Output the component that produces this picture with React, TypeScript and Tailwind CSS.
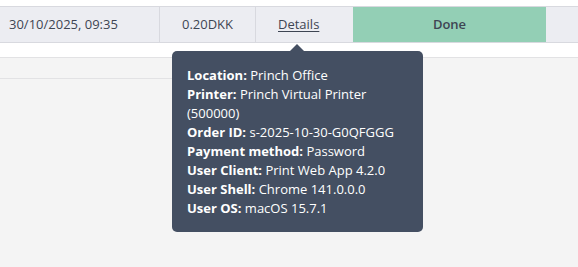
const rows: [string, string][] = [
  ["Location:", "Princh Office"],
  ["Printer:", "Princh Virtual Printer (500000)"],
  ["Order ID:", "s-2025-10-30-G0QFGGG"],
  ["Payment method:", "Password"],
  ["User Client:", "Print Web App 4.2.0"],
  ["User Shell:", "Chrome 141.0.0.0"],
  ["User OS:", "macOS 15.7.1"],
];

export default function App() {
  return (
    <div
      className="relative w-[578px] h-[267px] overflow-hidden bg-[#f4f4f4] text-[#3e4553]"
      style={{ fontFamily: '"Open Sans", "Noto Sans", sans-serif' }}
    >
      <div className="h-[6px] bg-white" />
      <div className="flex h-[37px] border-y border-[#d8d9df] bg-[#ecedf2] text-[13px]">
        <div className="flex w-[160px] items-center border-r border-[#d8d9df] pl-[9px]">
          30/10/2025, 09:35
        </div>
        <div className="flex w-[96px] items-center justify-center border-r border-[#d8d9df]">
          0.20DKK
        </div>
        <div className="flex w-[97px] items-center pl-[22px]">
          <span className="underline underline-offset-2">Details</span>
        </div>
        <div className="flex w-[193px] items-center justify-center bg-[#93cfb5] font-semibold">
          Done
        </div>
        <div className="flex-1" />
      </div>
      <div className="h-[14px] bg-white" />
      <div className="border-t border-[#e2e2e4]">
        <div className="h-[21px] w-[300px] border-b border-[#e2e2e4]" />
      </div>

      <div className="absolute left-[172px] top-[51px] w-[251px] rounded-[5px] bg-[#444f62] px-[15px] pt-[15px] pb-[14px] text-[13px] leading-[19px] text-white">
        <div className="absolute -top-[7px] left-[118px] h-0 w-0 border-x-[7px] border-b-[7px] border-x-transparent border-b-[#444f62]" />
        {rows.map(([k, v]) => (
          <div key={k}>
            <span className="font-bold">{k}</span> {v}
          </div>
        ))}
      </div>
    </div>
  );
}
